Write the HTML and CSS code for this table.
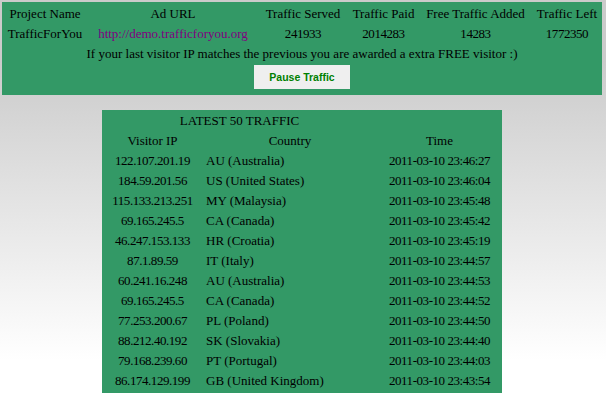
FILE: index.html
```html
<!DOCTYPE html>
<html lang="en">
<head>
<meta charset="utf-8">
<title>Traffic</title>
<link rel="stylesheet" href="styles.css">
</head>
<body>
<div class="page">
  <div class="panel">
    <table class="stats">
      <colgroup>
        <col class="c1"><col class="c2"><col class="c3"><col class="c4"><col class="c5"><col class="c6">
      </colgroup>
      <tr>
        <th>Project Name</th>
        <th>Ad URL</th>
        <th>Traffic Served</th>
        <th>Traffic Paid</th>
        <th>Free Traffic Added</th>
        <th>Traffic Left</th>
      </tr>
      <tr>
        <td>TrafficForYou</td>
        <td><a class="adlink" href="#">http://demo.trafficforyou.org</a></td>
        <td class="num">241933</td>
        <td class="num">2014283</td>
        <td class="num">14283</td>
        <td class="num">1772350</td>
      </tr>
      <tr>
        <td colspan="6">If your last visitor IP matches the previous you are awarded a extra FREE visitor :)</td>
      </tr>
    </table>
    <div class="actions">
      <button class="pause" type="button">Pause Traffic</button>
    </div>
  </div>

  <div class="latest">
    <table class="traffic">
      <colgroup>
        <col class="t1"><col class="t2"><col class="t3">
      </colgroup>
      <tr><th colspan="2">LATEST 50 TRAFFIC</th><th></th></tr>
      <tr><th>Visitor IP</th><th>Country</th><th>Time</th></tr>
      <tr><td class="num">122.107.201.19</td><td class="country">AU (Australia)</td><td class="num">2011-03-10 23:46:27</td></tr>
      <tr><td class="num">184.59.201.56</td><td class="country">US (United States)</td><td class="num">2011-03-10 23:46:04</td></tr>
      <tr><td class="num">115.133.213.251</td><td class="country">MY (Malaysia)</td><td class="num">2011-03-10 23:45:48</td></tr>
      <tr><td class="num">69.165.245.5</td><td class="country">CA (Canada)</td><td class="num">2011-03-10 23:45:42</td></tr>
      <tr><td class="num">46.247.153.133</td><td class="country">HR (Croatia)</td><td class="num">2011-03-10 23:45:19</td></tr>
      <tr><td class="num">87.1.89.59</td><td class="country">IT (Italy)</td><td class="num">2011-03-10 23:44:57</td></tr>
      <tr><td class="num">60.241.16.248</td><td class="country">AU (Australia)</td><td class="num">2011-03-10 23:44:53</td></tr>
      <tr><td class="num">69.165.245.5</td><td class="country">CA (Canada)</td><td class="num">2011-03-10 23:44:52</td></tr>
      <tr><td class="num">77.253.200.67</td><td class="country">PL (Poland)</td><td class="num">2011-03-10 23:44:50</td></tr>
      <tr><td class="num">88.212.40.192</td><td class="country">SK (Slovakia)</td><td class="num">2011-03-10 23:44:40</td></tr>
      <tr><td class="num">79.168.239.60</td><td class="country">PT (Portugal)</td><td class="num">2011-03-10 23:44:03</td></tr>
      <tr><td class="num">86.174.129.199</td><td class="country">GB (United Kingdom)</td><td class="num">2011-03-10 23:43:54</td></tr>
    </table>
  </div>
</div>
</body>
</html>
```

FILE: styles.css
```css
html {
  min-height: 100%;
  background: #ffffff linear-gradient(to bottom, #cbcbcb 0, #cbcbcb 60px, #ffffff 360px) no-repeat;
}

body {
  margin: 0;
  font-family: "Liberation Serif", "Times New Roman", serif;
  font-size: 13px;
  color: #000;
}

.page {
  width: 600px;
  padding: 2px;
}

.panel {
  background: #339966;
  padding-top: 1px;
}

.stats,
.traffic {
  border-collapse: collapse;
  table-layout: fixed;
}

.stats {
  width: 600px;
}

.stats th,
.stats td,
.traffic th,
.traffic td {
  padding: 2px 0 0;
  height: 18px;
  line-height: 18px;
  font-weight: normal;
  text-align: center;
  white-space: nowrap;
  vertical-align: top;
}

.c1 { width: 86px; }
.c2 { width: 170px; }
.c3 { width: 90px; }
.c4 { width: 71px; }
.c5 { width: 113px; }
.c6 { width: 70px; }

.num {
  letter-spacing: -0.45px;
}

.adlink {
  color: #800080;
  text-decoration: none;
}

.actions {
  display: flex;
  justify-content: center;
  padding: 2px 0 6px;
}

.pause {
  width: 96px;
  height: 24px;
  border: 0;
  margin: 0;
  padding: 0;
  background: #efefef;
  color: #008000;
  font-family: "Liberation Sans", Tahoma, sans-serif;
  font-size: 10.5px;
  font-weight: bold;
  cursor: pointer;
}

.latest {
  width: 400px;
  margin: 15px auto 0;
  background: #339966;
  padding-bottom: 6px;
}

.traffic {
  width: 400px;
}

.t1 { width: 101px; }
.t2 { width: 174px; }
.t3 { width: 125px; }

.traffic td.country {
  text-align: left;
  padding-left: 3px;
}
```
